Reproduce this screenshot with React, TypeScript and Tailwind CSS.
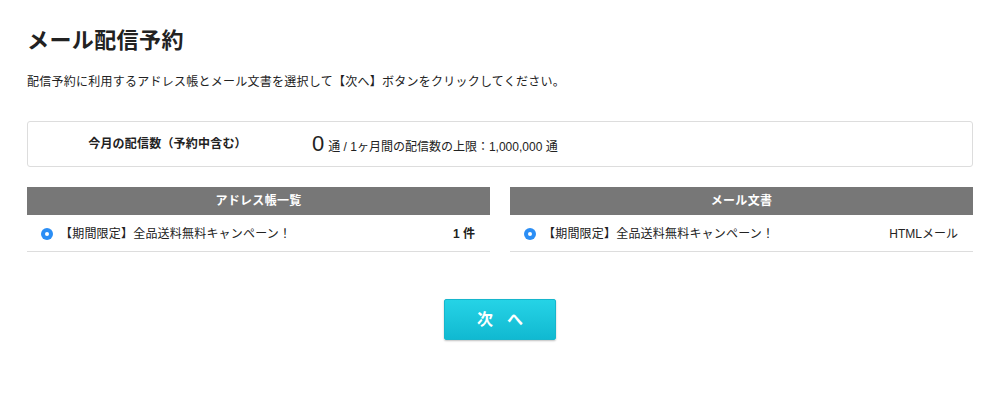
import React from "react";

const font = {
  fontFamily:
    '"Liberation Sans", "Noto Sans CJK JP", "Noto Sans", sans-serif',
};

function Radio() {
  return (
    <span className="inline-flex h-[12px] w-[12px] shrink-0 items-center justify-center rounded-full bg-[#2b8ef5]">
      <span className="h-[4px] w-[4px] rounded-full bg-white" />
    </span>
  );
}

function Column({ title, right }: { title: string; right: React.ReactNode }) {
  return (
    <div className="flex-1">
      <div className="flex h-[28px] items-center justify-center bg-[#777777] text-[12px] font-bold tracking-[0.3px] text-white">
        {title}
      </div>
      <div className="flex h-[37px] items-center border-b border-[#dddddd] pb-[1px] pl-[14px] pr-[15px] pt-[2px] text-[12px] text-[#222]">
        <Radio />
        <span className="ml-[7px] tracking-[0.2px]">【期間限定】全品送料無料キャンペーン！</span>
        <span className="ml-auto">{right}</span>
      </div>
    </div>
  );
}

export default function App() {
  return (
    <div className="min-h-[397px] w-[1000px] bg-white px-[27px] pt-[25px] text-[#222]" style={font}>
      <h1 className="text-[22px] font-bold leading-[32px] tracking-[0.4px] text-[#222]">メール配信予約</h1>
      <p className="mt-[16px] text-[12px] leading-[18px] tracking-[0.25px]">
        配信予約に利用するアドレス帳とメール文書を選択して【次へ】ボタンをクリックしてください。
      </p>
      <div className="mt-[30px] flex h-[46px] items-center rounded-[3px] border border-[#dddddd]">
        <div className="w-[279px] text-center text-[12px] font-bold tracking-[0.2px]">今月の配信数（予約中含む）</div>
        <div className="ml-[5px] flex items-baseline text-[12px]">
          <span className="text-[22px] font-light leading-none">0</span>
          <span className="ml-[4px]">通 / 1ヶ月間の配信数の上限：1,000,000 通</span>
        </div>
      </div>
      <div className="mt-[20px] flex gap-[20px]">
        <Column title="アドレス帳一覧" right={<span className="font-bold">1 件</span>} />
        <Column title="メール文書" right={<span>HTMLメール</span>} />
      </div>
      <div className="mt-[47px] flex justify-center">
        <button className="h-[41px] w-[112px] rounded-[2px] border border-[#16b6cc] bg-gradient-to-b from-[#25d3e6] to-[#10b9d1] text-[16px] font-bold tracking-[14px] text-white shadow-[0_1px_2px_rgba(0,0,0,0.25)]">
          <span className="pl-[14px]">次へ</span>
        </button>
      </div>
    </div>
  );
}
